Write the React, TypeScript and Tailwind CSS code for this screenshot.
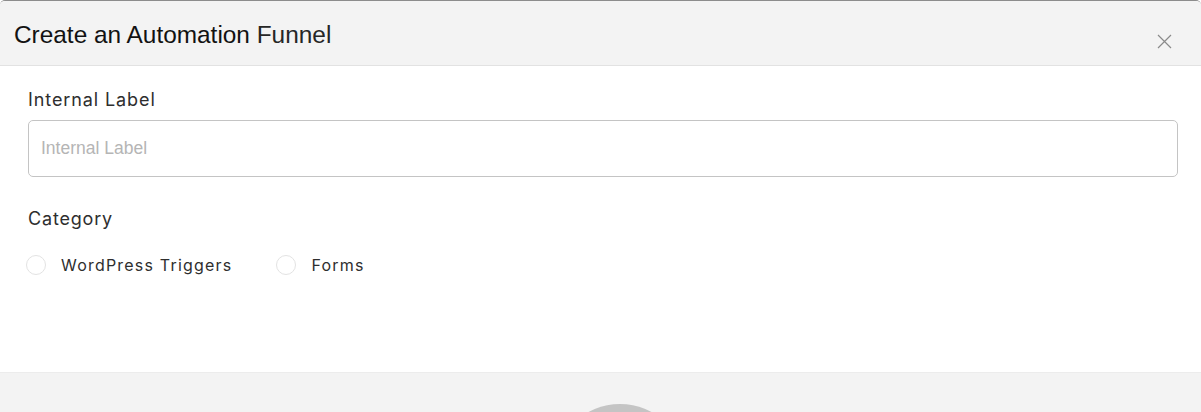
import React from 'react';

// ============================================================================
// CREATE FUNNEL MODAL
// ============================================================================

const categories = ['WordPress Triggers', 'Forms'];

const CloseIcon: React.FC = () => (
  <svg width="15" height="15" viewBox="0 0 15 15" fill="none" stroke="#8a8a8a" strokeWidth="1.2">
    <path d="M1 1L14 14M14 1L1 14" />
  </svg>
);

const RadioOption: React.FC<{ label: string }> = ({ label }) => (
  <label className="flex items-center gap-[15px] cursor-pointer">
    <span className="w-[20px] h-[20px] rounded-full border border-[#e3e3e3] bg-white" />
    <span className="text-[16px] leading-[24px] text-[#2e2e2e] tracking-[0.075em]">{label}</span>
  </label>
);

export default function App() {
  return (
    <div
      className="h-[412px] overflow-hidden bg-white"
      style={{ fontFamily: 'Inter, "Liberation Sans", Arial, sans-serif' }}
    >
      <div className="h-full flex flex-col border-t border-[#8c8c8c] rounded-t-[5px] overflow-hidden">
        {/* Header */}
        <div className="h-[65px] shrink-0 flex items-center justify-between pl-[14px] pr-[28px] bg-[#f3f3f3] border-b border-[#e2e2e2]">
          <h2
            className="mt-[3px] text-[24.4px] leading-[32px]"
            style={{ fontFamily: '"Liberation Sans", Arial, sans-serif' }}
          >
            <span className="text-[#121212]">Create an Automation</span>{' '}
            <span className="text-[#262626]">Funnel</span>
          </h2>
          <button className="mt-[17px] mr-[1px]">
            <CloseIcon />
          </button>
        </div>

        {/* Body */}
        <div className="h-[306px] shrink-0 pt-[22px] pl-[28px] pr-[23px]">
          <div className="text-[18px] leading-[24px] text-[#2e2e2e] tracking-[0.05em]">Internal Label</div>
          <input
            type="text"
            placeholder="Internal Label"
            className="mt-[8px] w-full h-[57px] px-[12px] rounded-[5px] border border-[#c4c4c4] outline-none text-[17.5px] placeholder:text-[#b5b5b5]"
            style={{ fontFamily: '"Liberation Sans", Arial, sans-serif' }}
          />

          <div className="mt-[30px] text-[18px] leading-[24px] text-[#2e2e2e] tracking-[0.045em]">Category</div>
          <div className="mt-[22px] -ml-[2px] flex items-center gap-[44px]">
            {categories.map((c) => (
              <RadioOption key={c} label={c} />
            ))}
          </div>
        </div>

        {/* Footer */}
        <div className="relative flex-1 bg-[#f3f3f3] border-t border-[#ececec]">
          <div className="absolute left-[554px] top-[31px] w-[132px] h-[132px] rounded-full bg-[#c4c4c4]" />
        </div>
      </div>
    </div>
  );
}
